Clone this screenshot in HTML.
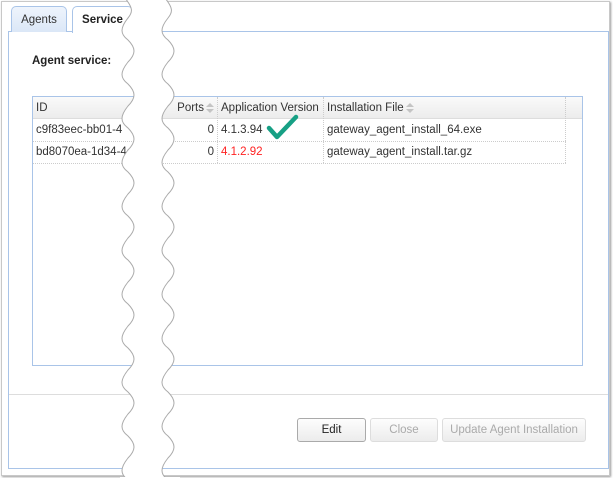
<!DOCTYPE html>
<html><head><style>
*{box-sizing:border-box;margin:0;padding:0}
body{width:613px;height:478px;background:#fff;font-family:"Liberation Sans",sans-serif;font-size:11.5px;color:#333;position:relative;overflow:hidden}
.abs{position:absolute}
.frame{left:1px;top:1px;width:609px;height:475px;border:1px solid #c8c8c8;box-shadow:1px 1px 2px #999}
.tab{top:6px;height:26px;border:1px solid #a9c4e8;border-bottom:none;border-radius:5px 5px 0 0;background:linear-gradient(#eef4fc,#dbe7f7);padding:7px 0 0;text-align:center;font-size:11.5px}
.panel{left:8px;top:31px;width:601px;height:438px;border:1px solid #a9c4e8;border-radius:0}
.tbl{left:32px;top:96px;width:551px;height:270px;border:1px solid #a9c4e8;background:#fff}
.hdr{left:0;top:0;width:549px;height:22px;background:linear-gradient(#fafafa,#ececec);border-bottom:1px solid #ddd}
.cell{position:absolute;height:22px;line-height:22px;padding:0 3px;white-space:nowrap}
.vl{position:absolute;top:0;width:0;border-left:1px dotted #ccc}
.hl{position:absolute;left:0;width:533px;border-top:1px dotted #ccc}
.btn{top:418px;height:24px;border:1px solid #c8c8c8;border-radius:3px;background:linear-gradient(#fdfdfd,#ececec);text-align:center;line-height:22px;font-size:11.5px}
.sort{display:inline-block;vertical-align:middle;width:8px;height:12px;position:relative;margin-left:2px}
.sort:before,.sort:after{content:"";position:absolute;left:0;border-left:4px solid transparent;border-right:4px solid transparent}
.sort:before{top:1px;border-bottom:4px solid #c4c4c4}
.sort:after{top:7px;border-top:4px solid #c4c4c4}
</style></head><body>
<div class="abs frame"></div>
<div class="abs panel"></div>
<div class="abs tab" style="left:11px;width:56px">Agents</div>
<div class="abs tab" style="left:72px;width:61px;background:#fff;height:27px;font-weight:bold;color:#222">Service</div>
<div class="abs" style="left:32px;top:55px;font-weight:bold;color:#222">Agent service:</div>
<div class="abs tbl">
 <div class="abs hdr"></div>
 <div class="cell" style="left:0;top:0">ID</div>
 <div class="cell" style="left:129px;top:0;width:55px;text-align:right">Ports<span class="sort"></span></div>
 <div class="cell" style="left:185px;top:0">Application Version</div>
 <div class="cell" style="left:291px;top:0">Installation File<span class="sort"></span></div>
 <div class="vl" style="left:184px;height:66px"></div>
 <div class="vl" style="left:290px;height:66px"></div>
 <div class="vl" style="left:532px;height:66px"></div>
 <div class="hl" style="top:44px"></div>
 <div class="hl" style="top:66px"></div>
 <div class="cell" style="left:0;top:22px">c9f83eec-bb01-4</div>
 <div class="cell" style="left:150px;top:22px;width:34px;text-align:right">0</div>
 <div class="cell" style="left:185px;top:22px">4.1.3.94</div>
 <div class="cell" style="left:291px;top:22px">gateway_agent_install_64.exe</div>
 <div class="cell" style="left:0;top:44px">bd8070ea-1d34-4c</div>
 <div class="cell" style="left:150px;top:44px;width:34px;text-align:right">0</div>
 <div class="cell" style="left:185px;top:44px;color:#f22">4.1.2.92</div>
 <div class="cell" style="left:291px;top:44px">gateway_agent_install.tar.gz</div>
</div>
<svg class="abs" style="left:266px;top:114px" width="34" height="28"><path d="M3 14 L11 23 L30 3" fill="none" stroke="#17a085" stroke-width="4.5" stroke-linecap="round" stroke-linejoin="round"/></svg>
<div class="abs" style="left:9px;top:394px;width:599px;border-top:1px solid #ddd"></div>
<div class="abs btn" style="left:297px;width:69px;border-color:#aaa;color:#222">Edit</div>
<div class="abs btn" style="left:370px;width:68px;color:#aaa;border-color:#ddd">Close</div>
<div class="abs btn" style="left:442px;width:144px;color:#aaa;border-color:#ddd">Update Agent Installation</div>
<svg class="abs" style="left:0;top:0" width="613" height="478">
<path d="M125 -2 C133 8,133 12,128 18 C120 28,120 34,128 40 C136 48,136 54,128 62 C120 72,120 78,128 84 C136 92,136 98,128 106 C120 116,120 122,128 128 C136 136,136 142,128 150 C120 160,120 166,128 172 C136 180,136 186,128 194 C120 204,120 210,128 216 C136 224,136 230,128 238 C120 248,120 254,128 260 C136 268,136 274,128 282 C120 292,120 298,128 304 C136 312,136 318,128 326 C120 336,120 342,128 348 C136 356,136 362,128 370 C120 380,120 386,128 392 C136 400,136 406,128 414 C120 424,120 430,128 436 C136 444,136 450,128 458 C120 468,120 474,128 480 L168 480 C160 474,160 468,168 458 C176 450,176 444,168 436 C160 430,160 424,168 414 C176 406,176 400,168 392 C160 386,160 380,168 370 C176 362,176 356,168 348 C160 342,160 336,168 326 C176 318,176 312,168 304 C160 298,160 292,168 282 C176 274,176 268,168 260 C160 254,160 248,168 238 C176 230,176 224,168 216 C160 210,160 204,168 194 C176 186,176 180,168 172 C160 166,160 160,168 150 C176 142,176 136,168 128 C160 122,160 116,168 106 C176 98,176 92,168 84 C160 78,160 72,168 62 C176 54,176 48,168 40 C160 34,160 28,168 18 C173 12,173 8,165 -2 Z" fill="#fff" stroke="#aaa" stroke-width="1"/>
<rect x="120" y="-5" width="60" height="4" fill="#fff"/>
<rect x="120" y="477" width="60" height="4" fill="#fff"/>
</svg>
</body></html>
